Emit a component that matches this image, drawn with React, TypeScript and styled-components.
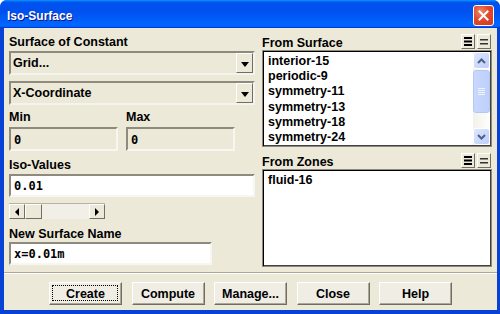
import React from 'react'
import styled, { createGlobalStyle } from 'styled-components'

const GlobalStyle = createGlobalStyle`
    html, body {
        margin: 0;
        padding: 0;
        background: #ffffff;
    }
    body {
        width: 500px;
        height: 314px;
        overflow: hidden;
        font-family: "Liberation Sans", Arial, sans-serif;
    }
`

const PANEL = '#ece9d8'
const SANS = '"Liberation Sans", Arial, sans-serif'
const MONO = '"DejaVu Sans Mono", "Liberation Mono", monospace'

const Window = styled.div`
    width: 500px;
    height: 314px;
    display: flex;
    flex-direction: column;
    background: #0841d6;
    border-radius: 7px 7px 0 0;
    overflow: hidden;
    box-sizing: border-box;
`

const TitleBar = styled.div`
    height: 28px;
    flex: none;
    display: flex;
    align-items: center;
    justify-content: space-between;
    padding: 0 6px 0 7px;
    background: linear-gradient(180deg, #0997ff, #0053ee 8%, #0050ee 40%, #0066ff 88%, #0066ff 93%, #005bff 95%, #003dd7 96%, #003dd7);
`

const TitleText = styled.span`
    color: #ffffff;
    font: bold 12px ${SANS};
    text-shadow: 1px 1px 0 #0f1089;
    margin-top: 3px;
`

const CloseButton = styled.div`
    width: 19px;
    height: 19px;
    margin-top: 2px;
    border: 1px solid #ffffff;
    border-radius: 3px;
    background: radial-gradient(circle at 35% 30%, #f1886a 0%, #e2492f 45%, #c93a1e 100%);
    display: flex;
    align-items: center;
    justify-content: center;
    box-sizing: content-box;
`

const Body = styled.div`
    flex: 1;
    margin: 0 3px 4px 4px;
    background: ${PANEL};
    display: flex;
    flex-direction: column;
`

const Main = styled.div`
    display: flex;
    padding: 4px 5px 0 5px;
`

const LeftCol = styled.div`
    width: 246px;
    display: flex;
    flex-direction: column;
`

const RightCol = styled.div`
    width: 230px;
    margin-left: 7px;
    display: flex;
    flex-direction: column;
`

const Label = styled.div<{ $h?: number; $mt?: number }>`
    font: bold 12.5px ${SANS};
    height: ${p => p.$h ?? 16}px;
    line-height: ${p => (p.$h ?? 16) + 2}px;
    margin-top: ${p => p.$mt ?? 0}px;
    color: #000000;
    white-space: nowrap;
`

const Combo = styled.div<{ $mt?: number }>`
    height: 24px;
    margin-top: ${p => p.$mt ?? 0}px;
    display: flex;
    box-sizing: border-box;
    border: 2px solid;
    border-color: #8e8b7e #f4f3ee #f4f3ee #8e8b7e;
    background: ${PANEL};
`

const ComboText = styled.div`
    flex: 1;
    font: bold 12.5px ${SANS};
    line-height: 21px;
    padding-left: 2px;
    color: #000000;
`

const ComboArrow = styled.div`
    width: 17px;
    box-sizing: border-box;
    border: 1px solid;
    border-color: #ffffff #6f6d64 #6f6d64 #ffffff;
    display: flex;
    align-items: center;
    justify-content: center;
    &::after {
        content: '';
        border-left: 4px solid transparent;
        border-right: 4px solid transparent;
        border-top: 5px solid #000000;
        margin-top: 2px;
    }
`

const Field = styled.div<{ $white?: boolean; $w?: number; $h?: number; $mt?: number }>`
    width: ${p => (p.$w ? `${p.$w}px` : 'auto')};
    height: ${p => p.$h ?? 23}px;
    margin-top: ${p => p.$mt ?? 0}px;
    box-sizing: border-box;
    border: 2px solid;
    border-color: #8e8b7e #f7f6f1 #f7f6f1 #8e8b7e;
    background: ${p => (p.$white ? '#ffffff' : PANEL)};
    padding: 1px 0 0 3px;
    display: flex;
    align-items: center;
    font: bold 12px ${MONO};
    color: #000000;
`

const PairRow = styled.div`
    display: grid;
    grid-template-columns: 109px 109px;
    column-gap: 8px;
`

const HScroll = styled.div`
    width: 96px;
    height: 16px;
    margin-top: 6px;
    display: flex;
    background: #f1efe6;
    box-sizing: border-box;
    border-top: 1px solid #b5b2a4;
`

const HScrollButton = styled.div<{ $dir: 'left' | 'right' }>`
    width: 16px;
    flex: none;
    box-sizing: border-box;
    background: ${PANEL};
    border: 1px solid;
    border-color: #ffffff #716f64 #716f64 #ffffff;
    display: flex;
    align-items: center;
    justify-content: center;
    &::after {
        content: '';
        border-top: 4px solid transparent;
        border-bottom: 4px solid transparent;
        ${p => (p.$dir === 'left' ? 'border-right: 4px solid #000;' : 'border-left: 4px solid #000;')}
    }
`

const HScrollThumb = styled.div`
    width: 17px;
    flex: none;
    box-sizing: border-box;
    background: ${PANEL};
    border: 1px solid;
    border-color: #ffffff #716f64 #716f64 #ffffff;
`

const HScrollTrack = styled.div`
    flex: 1;
`

const PanelHeader = styled.div<{ $h: number }>`
    height: ${p => p.$h}px;
    display: flex;
    align-items: flex-end;
    justify-content: space-between;
`

const SmallButtons = styled.div`
    display: flex;
    gap: 2px;
    margin-bottom: 1px;
    margin-right: 1px;
`

const SmallButton = styled.div`
    width: 14px;
    height: 15px;
    box-sizing: border-box;
    background: ${PANEL};
    border: 1px solid;
    border-color: #ffffff #716f64 #716f64 #ffffff;
    display: flex;
    align-items: center;
    justify-content: center;
`

const ListBox = styled.div<{ $h: number }>`
    height: ${p => p.$h}px;
    box-sizing: border-box;
    border: 1px solid #8e8b7e;
    box-shadow: inset 1px 1px 0 #000000, inset -1px -1px 0 #404040;
    background: #ffffff;
    display: flex;
    padding: 1px;
`

const ListItems = styled.div`
    flex: 1;
    padding: 2px 0 0 4px;
`

const ListItem = styled.div`
    font: bold 12.5px ${SANS};
    height: 15.2px;
    line-height: 15.2px;
    color: #000000;
    white-space: nowrap;
`

const VScroll = styled.div`
    width: 17px;
    flex: none;
    display: flex;
    flex-direction: column;
    background: linear-gradient(90deg, #f3f1ec, #fefefb);
`

const VScrollButton = styled.div`
    height: 17px;
    flex: none;
    box-sizing: border-box;
    border: 1px solid #ffffff;
    border-radius: 3px;
    background: linear-gradient(135deg, #dce6fd, #bccffb);
    display: flex;
    align-items: center;
    justify-content: center;
`

const VScrollThumb = styled.div`
    height: 43px;
    margin-top: 1px;
    box-sizing: border-box;
    border: 1px solid #b4c8f6;
    border-radius: 3px;
    background: linear-gradient(90deg, #c9d8fc, #bdd0fb);
    display: flex;
    align-items: center;
    justify-content: center;
`

const VScrollGap = styled.div`
    flex: 1;
`

const Separator = styled.div`
    margin: 5px 0 0 0;
    height: 1px;
    background: #aca899;
    border-bottom: 1px solid #ffffff;
`

const Footer = styled.div`
    display: flex;
    justify-content: center;
    gap: 9.5px;
    padding-top: 8px;
`

const Button = styled.div<{ $focus?: boolean }>`
    position: relative;
    width: 73px;
    height: 23px;
    box-sizing: border-box;
    background: #efede4;
    border: 1px solid;
    border-color: #ffffff #6f6d64 #6f6d64 #ffffff;
    box-shadow: inset -1px -1px 0 #aca899;
    display: flex;
    align-items: center;
    justify-content: center;
    padding-top: 1px;
    font: bold 12.5px ${SANS};
    color: #000000;
    ${p =>
        p.$focus &&
        `&::after {
            content: '';
            position: absolute;
            inset: 2px 3px 3px 2px;
            border: 1px dotted #000000;
        }`}
`

const ArrowGlyph = ({ up }: { up?: boolean }) => (
    <svg width="9" height="6" viewBox="0 0 9 6">
        <path
            d={up ? 'M1 5 L4.5 1.5 L8 5' : 'M1 1 L4.5 4.5 L8 1'}
            fill="none"
            stroke="#4d6185"
            strokeWidth="2"
        />
    </svg>
)

const Grip = () => (
    <svg width="7" height="8" viewBox="0 0 7 8">
        {[0, 2, 4, 6].map(y => (
            <rect key={y} x="0" y={y} width="7" height="1" fill="#eef3fe" />
        ))}
    </svg>
)

const MultiIcon = () => (
    <svg width="8" height="9" viewBox="0 0 8 9">
        <rect x="0" y="0" width="8" height="2" fill="#000" />
        <rect x="0" y="3.5" width="8" height="2" fill="#000" />
        <rect x="0" y="7" width="8" height="2" fill="#000" />
    </svg>
)

const SingleIcon = () => (
    <svg width="8" height="6" viewBox="0 0 8 6">
        <rect x="0" y="0" width="8" height="1.5" fill="#333" />
        <rect x="0" y="4" width="8" height="1.5" fill="#333" />
    </svg>
)

function ListHeader({ title, h }: { title: string; h: number }) {
    return (
        <PanelHeader $h={h}>
            <Label>{title}</Label>
            <SmallButtons>
                <SmallButton><MultiIcon /></SmallButton>
                <SmallButton><SingleIcon /></SmallButton>
            </SmallButtons>
        </PanelHeader>
    )
}

const surfaces = ['interior-15', 'periodic-9', 'symmetry-11', 'symmetry-13', 'symmetry-18', 'symmetry-24']

function App() {
    return (
        <>
            <GlobalStyle />
            <Window>
                <TitleBar>
                    <TitleText>Iso-Surface</TitleText>
                    <CloseButton>
                        <svg width="11" height="11" viewBox="0 0 11 11">
                            <path d="M1.5 1.5 L9.5 9.5 M9.5 1.5 L1.5 9.5" stroke="#fff" strokeWidth="2" strokeLinecap="square" />
                        </svg>
                    </CloseButton>
                </TitleBar>
                <Body>
                    <Main>
                        <LeftCol>
                            <Label $h={18}>Surface of Constant</Label>
                            <Combo $mt={1}>
                                <ComboText>Grid...</ComboText>
                                <ComboArrow />
                            </Combo>
                            <Combo $mt={6}>
                                <ComboText>X-Coordinate</ComboText>
                                <ComboArrow />
                            </Combo>
                            <PairRow>
                                <Label $mt={3}>Min</Label>
                                <Label $mt={3}>Max</Label>
                                <Field $h={24} $mt={3}>0</Field>
                                <Field $h={24} $mt={3}>0</Field>
                            </PairRow>
                            <Label $mt={5}>Iso-Values</Label>
                            <Field $white $mt={2}>0.01</Field>
                            <HScroll>
                                <HScrollButton $dir="left" />
                                <HScrollThumb />
                                <HScrollTrack />
                                <HScrollButton $dir="right" />
                            </HScroll>
                            <Label $mt={6}>New Surface Name</Label>
                            <Field $white $w={203} $mt={1}>x=0.01m</Field>
                        </LeftCol>
                        <RightCol>
                            <ListHeader title="From Surface" h={18} />
                            <ListBox $h={97}>
                                <ListItems>
                                    {surfaces.map(s => (
                                        <ListItem key={s}>{s}</ListItem>
                                    ))}
                                </ListItems>
                                <VScroll>
                                    <VScrollButton><ArrowGlyph up /></VScrollButton>
                                    <VScrollThumb><Grip /></VScrollThumb>
                                    <VScrollGap />
                                    <VScrollButton><ArrowGlyph /></VScrollButton>
                                </VScroll>
                            </ListBox>
                            <ListHeader title="From Zones" h={22} />
                            <ListBox $h={98}>
                                <ListItems>
                                    <ListItem>fluid-16</ListItem>
                                </ListItems>
                            </ListBox>
                        </RightCol>
                    </Main>
                    <Separator />
                    <Footer>
                        <Button $focus>Create</Button>
                        <Button>Compute</Button>
                        <Button>Manage...</Button>
                        <Button>Close</Button>
                        <Button>Help</Button>
                    </Footer>
                </Body>
            </Window>
        </>
    )
}

export default App
